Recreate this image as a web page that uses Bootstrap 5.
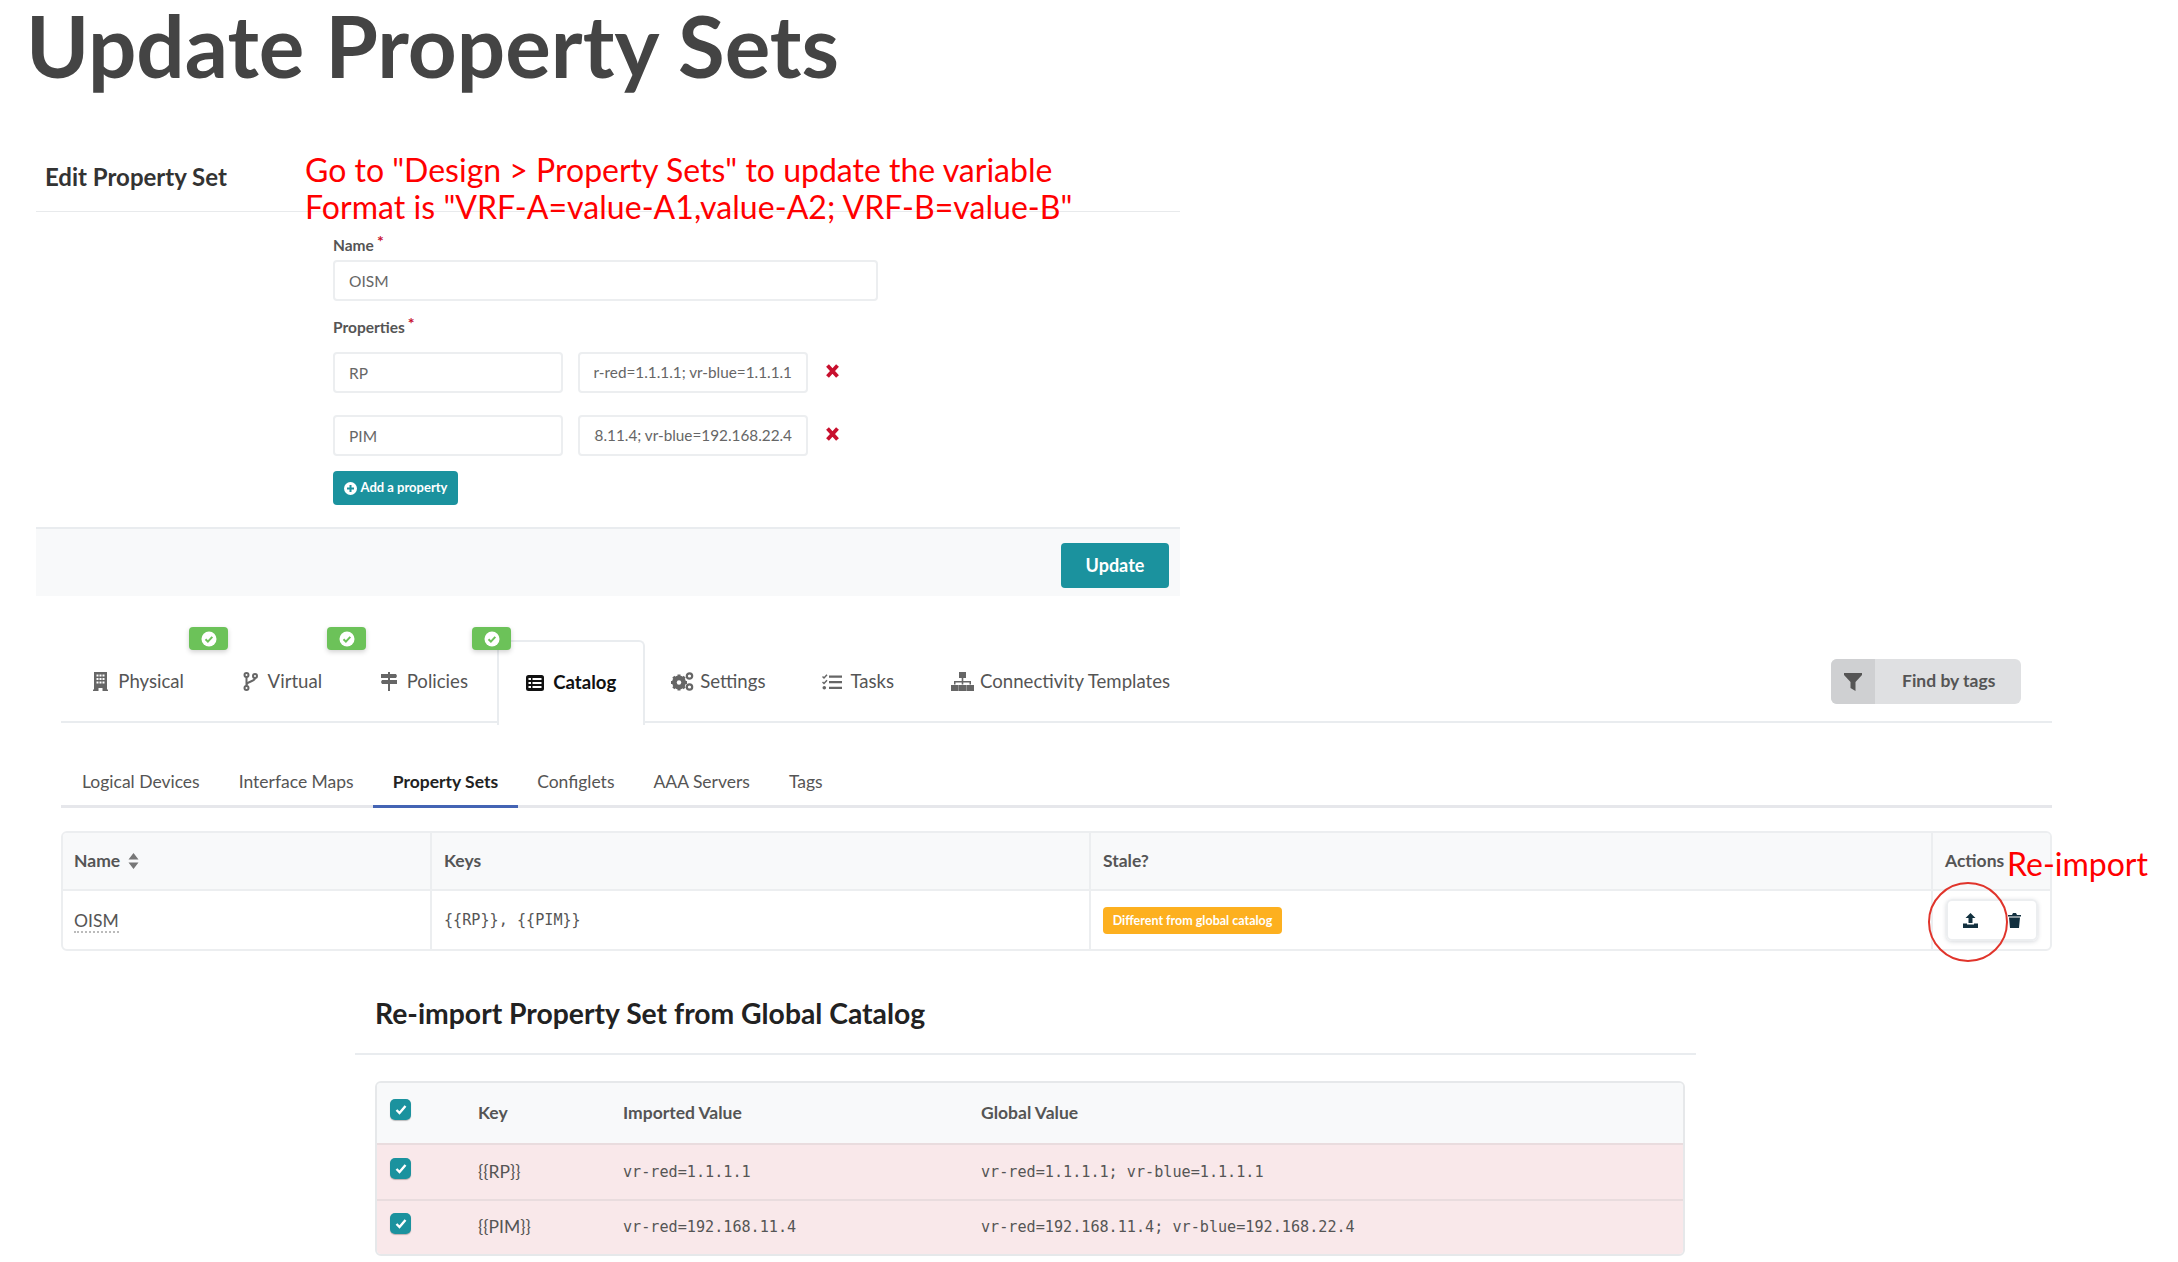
<!DOCTYPE html>
<html lang="en">
<head>
  <meta charset="UTF-8">
  <meta name="viewport" content="width=device-width, initial-scale=1">
  <title>Update Property Sets</title>
  <link href="https://cdn.jsdelivr.net/npm/bootstrap@5.3.0/dist/css/bootstrap.min.css" rel="stylesheet">
  <style>
    body { font-family: Lato, "Liberation Sans", sans-serif; color: #4a4a4a; background: #fff; position: relative; height: 1262px; overflow: hidden; }
    svg { display: block; flex: none; }
    .page-title { font-size: 85.3px; font-weight: 700; line-height: 90px; color: #444; margin: 0 0 0 26px; height: 135px; }
    .edit-panel { width: 1144px; margin-left: 36px; }
    .edit-head { height: 77px; padding: 27px 0 0 9px; border-bottom: 1px solid #e8eaec; font-size: 24px; font-weight: 700; color: #333; line-height: 30px; }
    .edit-form { padding: 23px 0 0 297px; height: 315px; }
    .edit-label { font-size: 15.5px; font-weight: 700; color: #555; margin: 0; line-height: 20px; display: block; }
    .edit-label i { color: #c8102e; font-style: normal; font-size: 16px; position: relative; top: -4px; margin-left: 3px; }
    .edit-form .form-control { height: 41px; font-size: 15.5px; color: #666; border: 2px solid #eceef0; border-radius: 4px; padding: 0 14px; box-shadow: none; }
    .name-input { width: 545px; margin: 5px 0 16px; }
    .prop-row { display: flex; align-items: flex-start; gap: 15px; margin-bottom: 22px; }
    .prop-row .form-control { width: 230px; }
    .prop-row .prop-val { display: flex; align-items: center; font-size: 15.3px; }
    .prop-clip { display: block; width: 100%; overflow: hidden; direction: rtl; white-space: nowrap; text-align: left; }
    .prop-del { margin: 12px 0 0 3px; }
    .first-prop { margin-top: 15px; }
    .add-btn { display: flex; align-items: center; justify-content: center; gap: 4px; background: #1b929e; color: #fff; border: 0; border-radius: 4px; font-size: 13px; font-weight: 700; padding: 0; height: 34px; width: 125px; margin-top: -7px; white-space: nowrap; }
    .edit-foot { height: 69px; background: #f8f9fa; border-top: 2px solid #e9ecef; display: flex; justify-content: flex-end; align-items: flex-start; padding: 14px 11px 0 0; }
    .update-btn { background: #1b929e; color: #fff; border: 0; border-radius: 4px; font-size: 18px; font-weight: 700; width: 108px; height: 45px; padding: 0; }
    .main-tabs { margin: 44px 126px 0 61px; border-bottom: 2px solid #e9ecef; height: 83px; display: flex; justify-content: space-between; align-items: flex-start; padding-left: 3px; }
    .main-tabs .nav-tabs { border: 0; flex-wrap: nowrap; }
    .main-tabs .nav-link { position: relative; display: flex; align-items: center; gap: 10px; height: 83px; padding: 0 29.3px; margin: 0; border: 0; border-radius: 0; color: #555; font-size: 18.6px; background: none; }
    .main-tabs .tab-tail .nav-link { padding: 0 28.5px; }
    .main-tabs .tab-after .nav-link { padding-left: 26px; }
    .main-tabs .nav-link.active { color: #111; font-weight: 700; width: 148px; padding: 0 0 2px 27px; border: 2px solid #e9ecef; border-bottom: 0; border-radius: 6px 6px 0 0; background: #fff; height: 85px; gap: 9px; }
    .tab-ok { position: absolute; top: -13px; width: 39px; height: 23px; background: #6cc259; border-radius: 4px; display: flex; align-items: center; justify-content: center; box-shadow: 0 2px 5px rgba(0,0,0,.18); z-index: 2; }
    .tag-find { display: flex; width: 190px; height: 45px; background: #dfe0e2; border-radius: 6px; overflow: hidden; margin: 19px 31px 0 0; color: #555; font-size: 17.5px; font-weight: 700; align-items: center; }
    .tag-find span { display: flex; align-items: center; justify-content: center; width: 44px; height: 45px; background: #cfd0d2; margin-right: 27px; }
    .sub-tabs { margin: 39px 126px 0 61px; padding-left: 1.5px; border-bottom: 3px solid #e6e7eb; flex-wrap: nowrap; height: 46px; }
    .sub-tabs .nav-link { padding: 0 19.5px; height: 46px; line-height: 40px; font-size: 17.5px; color: #555; border-bottom: 3px solid transparent; }
    .sub-tabs .nav-link.active { color: #222; font-weight: 700; border-bottom-color: #4464b4; }
    .set-table { width: 1991px; margin: 23px 0 0 61px; border: 2px solid #eceef0; border-radius: 6px; overflow: hidden; }
    .set-head { display: grid; grid-template-columns: 369px 659px 842px 1fr; height: 58px; background: #f8f9fa; border-bottom: 2px solid #eceef0; font-size: 17.5px; font-weight: 700; color: #555; }
    .set-row { display: grid; grid-template-columns: 369px 659px 842px 1fr; height: 58px; font-size: 17.5px; color: #555; }
    .set-head > div, .set-row > div { display: flex; align-items: center; padding-left: 12px; border-right: 2px solid #eceef0; }
    .set-head > div:first-child, .set-row > div:first-child { padding-left: 11px; }
    .set-head > div:last-child, .set-row > div:last-child { border-right: 0; }
    .set-name { border-bottom: 2px dotted #bbb; line-height: 20px; font-size: 17.5px; margin-top: 3px; }
    .mono-txt { font-family: "DejaVu Sans Mono", "Liberation Mono", monospace; font-size: 15.15px; color: #555; }
    .stale-tag { background: #fdb01f; color: #fff; font-size: 12.5px; font-weight: 700; border-radius: 4px; height: 27px; width: 179px; padding: 0; line-height: 27px; text-align: center; }
    .act-group { display: flex; align-items: center; width: 92px; height: 42px; margin-left: 1px; border: 2px solid #eceef0; border-radius: 6px; box-shadow: 0 1px 4px rgba(60,70,90,.2); }
    .act-group span { flex: 1; display: flex; justify-content: center; }
    .imp-title { margin: 44px 0 0 355px; width: 1341px; height: 60px; padding-left: 20px; border-bottom: 2px solid #e9ecef; font-size: 28.3px; font-weight: 700; color: #222; line-height: 36px; }
    .imp-table { width: 1310px; margin: 26px 0 0 375px; border: 2px solid #e6e8ea; border-radius: 6px; overflow: hidden; }
    .imp-head, .imp-row { display: grid; grid-template-columns: 101px 145px 358px 1fr; align-items: center; font-size: 17.5px; }
    .imp-head { height: 60px; background: #f8f9fa; font-weight: 700; color: #555; }
    .imp-row { height: 56px; background: #f9e8ea; border-top: 2px solid #e9dcde; color: #555; }
    .imp-row:last-child { height: 55px; }
    .imp-check { width: 21px; height: 21px; background: #1b929e; border-radius: 5px; margin: -8px 0 0 13px; display: flex; align-items: center; justify-content: center; box-shadow: 0 1px 1px rgba(0,0,0,.25); }
    .note-red { position: absolute; color: #f00; font-size: 32px; line-height: 37px; white-space: nowrap; }
    .note-one { left: 305px; top: 151px; }
    .note-two { left: 305px; top: 188px; letter-spacing: .05px; }
    .note-three { left: 2007px; top: 845px; }
    .note-ring { position: absolute; left: 1928px; top: 882px; width: 80px; height: 80px; border: 2px solid #e0342b; border-radius: 50%; }
  </style>
</head>
<body>

<h1 class="page-title">Update Property Sets</h1>

<div class="edit-panel">
  <div class="edit-head">Edit Property Set</div>
  <div class="edit-form">
    <label class="edit-label">Name<i>*</i></label>
    <input class="form-control name-input" type="text" value="OISM">
    <label class="edit-label">Properties<i>*</i></label>
    <div class="prop-row first-prop">
      <input class="form-control" type="text" value="RP">
      <div class="form-control prop-val"><span class="prop-clip">vr-red=1.1.1.1; vr-blue=1.1.1.1</span></div>
      <svg class="prop-del" width="13" height="14" viewBox="0 0 13 14"><path d="M1.500 1.500l10 11M11.500 1.500l-10 11" stroke="#c8102e" stroke-width="3.800"/></svg>
    </div>
    <div class="prop-row">
      <input class="form-control" type="text" value="PIM">
      <div class="form-control prop-val"><span class="prop-clip">vr-red=192.168.11.4; vr-blue=192.168.22.4</span></div>
      <svg class="prop-del" width="13" height="14" viewBox="0 0 13 14"><path d="M1.500 1.500l10 11M11.500 1.500l-10 11" stroke="#c8102e" stroke-width="3.800"/></svg>
    </div>
    <button class="btn add-btn" type="button">
      <svg width="13" height="13" viewBox="0 0 13 13"><circle cx="6.500" cy="6.500" r="6.500" fill="#fff"/><path d="M6.500 3v7M3 6.500h7" stroke="#1b929e" stroke-width="2"/></svg>
      Add a property
    </button>
  </div>
  <div class="edit-foot"><button class="btn update-btn" type="button">Update</button></div>
</div>

<div class="main-tabs">
  <ul class="nav nav-tabs">
    <li class="nav-item"><a class="nav-link" href="#">
      <svg width="15" height="19" viewBox="0 0 15 19"><path fill="#666" d="M1 0h13v17.500h1V19H9.500v-3h-4v3H0v-1.500h1z"/><path fill="#fff" d="M3.500 2.500h2v2h-2zM6.500 2.500h2v2h-2zM9.500 2.500h2v2h-2zM3.500 6h2v2h-2zM6.500 6h2v2h-2zM9.500 6h2v2h-2zM3.500 9.500h2v2h-2zM6.500 9.500h2v2h-2zM9.500 9.500h2v2h-2z"/></svg>
      Physical<span class="tab-ok" style="left:125px"><svg width="16" height="16" viewBox="0 0 16 16"><circle cx="8" cy="8" r="7.500" fill="#fff"/><path d="M4.500 8.200l2.400 2.400 4.400-4.700" fill="none" stroke="#6cc259" stroke-width="2"/></svg></span></a></li>
    <li class="nav-item"><a class="nav-link" href="#">
      <svg width="15" height="19" viewBox="0 0 15 19" fill="none" stroke="#666" stroke-width="2"><circle cx="3.500" cy="3" r="2"/><circle cx="3.500" cy="16" r="2"/><circle cx="12" cy="4" r="2"/><path d="M3.500 5v9M12 6c0 4-8.500 3-8.500 7"/></svg>
      Virtual<span class="tab-ok" style="left:114px"><svg width="16" height="16" viewBox="0 0 16 16"><circle cx="8" cy="8" r="7.500" fill="#fff"/><path d="M4.500 8.200l2.400 2.400 4.400-4.700" fill="none" stroke="#6cc259" stroke-width="2"/></svg></span></a></li>
    <li class="nav-item"><a class="nav-link" href="#">
      <svg width="16" height="19" viewBox="0 0 16 19"><path fill="#666" d="M7 0h2v2h6l1 2-1 2H9v2h7v4H9v7H7v-7H1l-1-2 1-2h6V6H0V2h7z"/></svg>
      Policies<span class="tab-ok" style="left:121px"><svg width="16" height="16" viewBox="0 0 16 16"><circle cx="8" cy="8" r="7.500" fill="#fff"/><path d="M4.500 8.200l2.400 2.400 4.400-4.700" fill="none" stroke="#6cc259" stroke-width="2"/></svg></span></a></li>
    <li class="nav-item"><a class="nav-link active" href="#">
      <svg width="18" height="16" viewBox="0 0 18 16"><rect width="18" height="16" rx="2.500" fill="#111"/><path fill="#fff" d="M2.500 3h2.500v2H2.500zM6.500 3h9v2h-9zM2.500 7h2.500v2H2.500zM6.500 7h9v2h-9zM2.500 11h2.500v2H2.500zM6.500 11h9v2h-9z"/></svg>
      Catalog</a></li>
    <li class="nav-item tab-tail tab-after"><a class="nav-link" href="#" style="gap:6px">
      <svg width="23" height="19" viewBox="0 0 23 19"><circle cx="8" cy="10.500" r="5.200" fill="none" stroke="#666" stroke-width="3.400"/><path stroke="#666" stroke-width="3" d="M8 2.500v16M0 10.500h16M2.300 4.800l11.400 11.400M13.700 4.800L2.300 16.200"/><circle cx="8" cy="10.500" r="2.200" fill="#fff"/><circle cx="18.500" cy="4" r="2.700" fill="none" stroke="#666" stroke-width="2.200"/><circle cx="18.500" cy="15" r="2.700" fill="none" stroke="#666" stroke-width="2.200"/></svg>
      Settings</a></li>
    <li class="nav-item tab-tail"><a class="nav-link" href="#" style="gap:8px">
      <svg width="20" height="16" viewBox="0 0 20 16"><path fill="none" stroke="#666" stroke-width="1.500" d="M.5 2.500l1.500 1.500L5 .8M.5 8l1.500 1.500L5 6.300"/><circle cx="2.300" cy="13.800" r="1.800" fill="#666"/><path fill="#666" d="M7 1.500h13v2.200H7zM7 7h13v2.200H7zM7 12.700h13v2.200H7z"/></svg>
      Tasks</a></li>
    <li class="nav-item tab-tail"><a class="nav-link" href="#" style="gap:6px">
      <svg width="23" height="19" viewBox="0 0 23 19"><path fill="#666" d="M8 0h7v6H12.300v3H20v3.500h-1.500V10.500h-6.200v2h-1.600v-2H4.500v2H3V9h7.700V6H8zM0 13h7.500v6H0zM7.800 13h7.400v6H7.800zM15.500 13H23v6h-7.500z"/></svg>
      Connectivity Templates</a></li>
  </ul>
  <div class="tag-find"><span><svg width="18" height="18" viewBox="0 0 18 18"><path fill="#555" d="M0 0h18v2l-6.500 7v9L6.500 15V9L0 2z"/></svg></span>Find by tags</div>
</div>

<ul class="nav sub-tabs">
  <li class="nav-item"><a class="nav-link" href="#">Logical Devices</a></li>
  <li class="nav-item"><a class="nav-link" href="#">Interface Maps</a></li>
  <li class="nav-item"><a class="nav-link active" href="#">Property Sets</a></li>
  <li class="nav-item"><a class="nav-link" href="#">Configlets</a></li>
  <li class="nav-item"><a class="nav-link" href="#">AAA Servers</a></li>
  <li class="nav-item"><a class="nav-link" href="#">Tags</a></li>
</ul>

<div class="set-table">
  <div class="set-head">
    <div>Name<svg class="ms-2" width="11" height="16" viewBox="0 0 11 16"><path fill="#777" d="M5.500 0l5 6.500H.5zM5.500 16l5-6.500H.5z"/></svg></div>
    <div>Keys</div>
    <div>Stale?</div>
    <div>Actions</div>
  </div>
  <div class="set-row">
    <div><span class="set-name">OISM</span></div>
    <div class="mono-txt">{{RP}}, {{PIM}}</div>
    <div><span class="badge stale-tag">Different from global catalog</span></div>
    <div>
      <div class="act-group">
        <span><svg width="15" height="15" viewBox="0 0 15 15"><path fill="#12303f" d="M7.500 0l5 5H9.500v5h-4V5h-3z"/><path fill="#12303f" d="M0 10.500h4v1h7v-1h4V15H0z"/></svg></span>
        <span><svg width="13" height="15" viewBox="0 0 13 15"><path fill="#12303f" d="M0 2h4l1-2h3l1 2h4v1.500H0zM1 4.500h11L11 15H2z"/></svg></span>
      </div>
    </div>
  </div>
</div>

<div class="imp-title">Re-import Property Set from Global Catalog</div>

<div class="imp-table">
  <div class="imp-head">
    <div><div class="imp-check"><svg width="12" height="11" viewBox="0 0 12 11"><path d="M1.500 6l3 3 6-7" fill="none" stroke="#fff" stroke-width="2.400"/></svg></div></div>
    <div>Key</div>
    <div>Imported Value</div>
    <div>Global Value</div>
  </div>
  <div class="imp-row">
    <div><div class="imp-check"><svg width="12" height="11" viewBox="0 0 12 11"><path d="M1.500 6l3 3 6-7" fill="none" stroke="#fff" stroke-width="2.400"/></svg></div></div>
    <div>{{RP}}</div>
    <div class="mono-txt">vr-red=1.1.1.1</div>
    <div class="mono-txt">vr-red=1.1.1.1; vr-blue=1.1.1.1</div>
  </div>
  <div class="imp-row">
    <div><div class="imp-check"><svg width="12" height="11" viewBox="0 0 12 11"><path d="M1.500 6l3 3 6-7" fill="none" stroke="#fff" stroke-width="2.400"/></svg></div></div>
    <div>{{PIM}}</div>
    <div class="mono-txt">vr-red=192.168.11.4</div>
    <div class="mono-txt">vr-red=192.168.11.4; vr-blue=192.168.22.4</div>
  </div>
</div>

<div class="note-red note-one">Go to "Design &gt; Property Sets" to update the variable</div>
<div class="note-red note-two">Format is "VRF-A=value-A1,value-A2; VRF-B=value-B"</div>
<div class="note-red note-three">Re-import</div>
<div class="note-ring"></div>

<script src="https://cdn.jsdelivr.net/npm/bootstrap@5.3.0/dist/js/bootstrap.bundle.min.js"></script>
</body>
</html>
